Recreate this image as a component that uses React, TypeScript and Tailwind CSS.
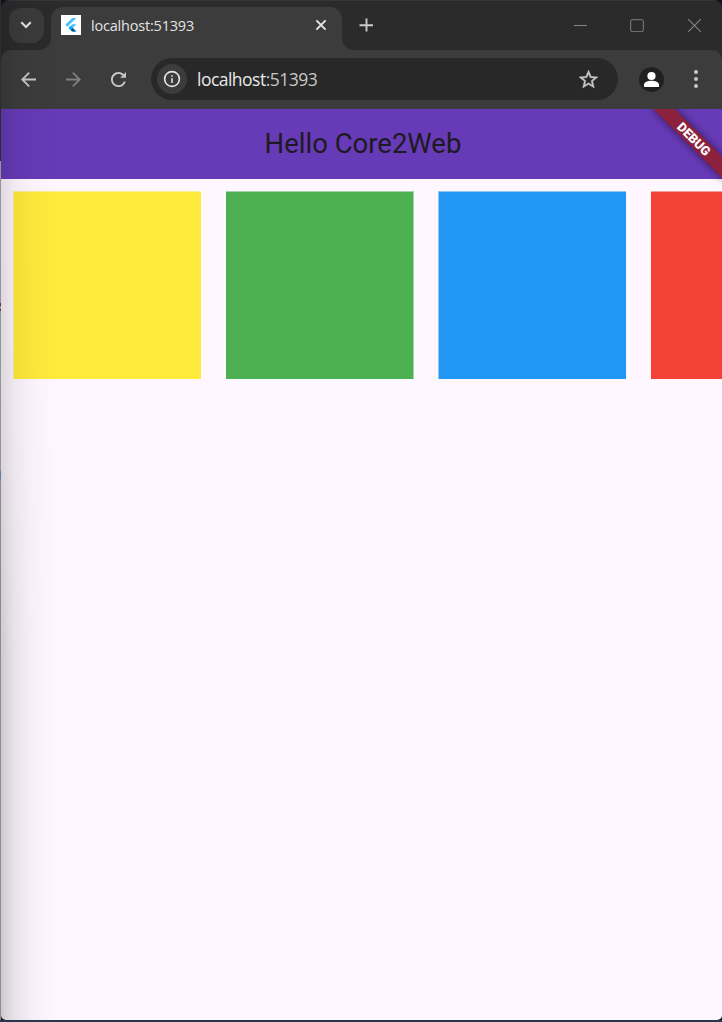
import React from 'react';

const uiFont = "font-['Open_Sans','Noto_Sans',sans-serif]";

function FlutterLogo() {
  return (
    <svg viewBox="0 0 20 20" className="block size-5 bg-white">
      <path d="M11.2 3h4.1L6.5 11.7 4.4 9.7z" fill="#47c5fb" />
      <path d="M11.2 9.3h4.1l-3.6 3.6 3.6 3.7h-4.1l-3.7-3.7z" fill="#47c5fb" />
      <path d="M9.5 14.8l2.1-2 3.7 3.8h-4.1z" fill="#00569e" />
      <path d="M7.5 12.9l2-2.1 2.1 2-2.1 2.1z" fill="#00b5f8" />
    </svg>
  );
}

function TabStrip() {
  return (
    <div className="flex h-[50px] shrink-0 items-start bg-[#2b2b2b] border-t border-[#37373b]">
      <div className="ml-2 mt-[7px] flex size-[35px] items-center justify-center rounded-[12px] bg-[#3b3b3b]">
        <svg viewBox="0 0 12 8" className="-ml-px -mt-px h-2 w-3" fill="none" stroke="#e3e3e3" strokeWidth="2.1">
          <path d="M1.3 1.3L6 6l4.7-4.7" />
        </svg>
      </div>
      <div className="relative ml-[7px] mt-[6px] flex h-[43px] w-[291px] items-start rounded-t-[12px] bg-[#3c3c3c] pl-[10px] pt-[8px]">
        <svg viewBox="0 0 12 12" className="absolute -left-3 bottom-0 size-3">
          <path d="M12 0v12H0A12 12 0 0 0 12 0z" fill="#3c3c3c" />
        </svg>
        <svg viewBox="0 0 12 12" className="absolute -right-3 bottom-0 size-3">
          <path d="M0 0v12h12A12 12 0 0 1 0 0z" fill="#3c3c3c" />
        </svg>
        <FlutterLogo />
        <span className={`${uiFont} ml-[10px] mt-px w-[104px] whitespace-nowrap text-[14.5px] leading-5 tracking-[-0.2px] text-[#e3e3e3]`}>
          localhost:51393
        </span>
        <svg viewBox="0 0 12 12" className="ml-[120px] mt-[4px] size-3" stroke="#e3e3e3" strokeWidth="2">
          <path d="M1.4 1.4l9.2 9.2M10.6 1.4l-9.2 9.2" />
        </svg>
      </div>
      <svg viewBox="0 0 14 14" className="ml-[17px] mt-[17px] size-[14px]" stroke="#cbcbcb" strokeWidth="1.9">
        <path d="M7.5 .5v13M.5 7.2h13.5" />
      </svg>
      <div className="ml-auto flex h-full items-start pr-5 pt-[17px]">
        <svg viewBox="0 0 14 14" className="size-[14px]" stroke="#858585">
          <path d="M0 7.5h13" />
        </svg>
        <svg viewBox="0 0 14 14" className="ml-[42px] size-[14px]" fill="none" stroke="#808080">
          <rect x=".7" y="1.7" width="12.6" height="12" rx="1.5" />
        </svg>
        <svg viewBox="0 0 14 14" className="ml-[44px] size-[14px]" stroke="#858585" strokeWidth="1.1">
          <path d="M.2 1.2l12.6 12.6M12.8 1.2L.2 13.8" />
        </svg>
      </div>
    </div>
  );
}

function Toolbar() {
  return (
    <div className="flex h-[59px] shrink-0 items-center rounded-t-[10px] bg-[#3c3c3c] pb-px pl-5 pr-[18px]">
      <svg viewBox="4 4 16 16" className="size-[15px] shrink-0" fill="#c7c7c7">
        <path d="M20 11H7.83l5.59-5.59L12 4l-8 8 8 8 1.41-1.41L7.83 13H20v-2z" />
      </svg>
      <svg viewBox="4 4 16 16" className="ml-[30px] size-[15px] shrink-0" fill="#7f7f7f">
        <path d="M12 4l-1.41 1.41L16.17 11H4v2h12.17l-5.58 5.59L12 20l8-8z" />
      </svg>
      <svg viewBox="4 4 16 16" className="ml-[30px] mr-px size-[15px] shrink-0" fill="#c7c7c7">
        <path d="M17.65 6.35C16.2 4.9 14.21 4 12 4c-4.42 0-7.99 3.58-7.99 8s3.57 8 7.99 8c3.73 0 6.84-2.55 7.73-6h-2.08c-.82 2.33-3.04 4-5.65 4-3.31 0-6-2.69-6-6s2.69-6 6-6c1.66 0 3.14.69 4.22 1.78L13.8 10.2H20V4z" />
      </svg>
      <div className="ml-[24px] flex h-[42px] w-[467px] items-center rounded-full bg-[#282828] pl-[6px] pr-5">
        <div className="flex size-[30px] items-center justify-center rounded-full bg-[#3c3c3c]">
          <svg viewBox="0 0 18 18" className="size-[18px]">
            <circle cx="9" cy="9" r="7.4" fill="none" stroke="#e3e3e3" strokeWidth="1.7" />
            <path d="M8.2 8.2h1.6v4.7H8.2zM8.2 5.2h1.6v1.6H8.2z" fill="#e3e3e3" />
          </svg>
        </div>
        <span className={`${uiFont} ml-[10px] whitespace-nowrap text-[17.5px] leading-6 tracking-[-0.52px] text-[#c7c7c7]`}>
          <span className="text-[#e8e8e8]">localhost</span>:51393
        </span>
        <svg viewBox="2 2 20 20" className="ml-auto size-[19px]" fill="#c7c7c7" stroke="#c7c7c7" strokeWidth=".4">
          <path d="M22 9.24l-7.19-.62L12 2 9.19 8.63 2 9.24l5.46 4.73L5.82 21 12 17.27 18.18 21l-1.63-7.03L22 9.24zM12 15.4l-3.76 2.27 1-4.28-3.32-2.88 4.38-.38L12 6.1l1.71 4.04 4.38.38-3.32 2.88 1 4.28L12 15.4z" />
        </svg>
      </div>
      <svg viewBox="0 0 25 25" className="ml-[21px] size-[25px] shrink-0">
        <circle cx="12.5" cy="12.5" r="12.5" fill="#1f2120" />
        <circle cx="12.5" cy="9" r="4.1" fill="#fff" />
        <path d="M5 20v-2.4c0-2.5 4-3.8 7.5-3.8s7.5 1.3 7.5 3.8V20z" fill="#fff" />
      </svg>
      <svg viewBox="0 0 18 18" className="ml-auto -mr-px size-[18px] shrink-0" fill="#c7c7c7">
        <circle cx="9" cy="2" r="2" />
        <circle cx="9" cy="9" r="2" />
        <circle cx="9" cy="16" r="2" />
      </svg>
    </div>
  );
}

function AppBar() {
  return (
    <div className="relative flex h-[70px] shrink-0 items-center justify-center bg-[#673ab7] pb-[2px] pl-[3px]">
      <h1 className="whitespace-nowrap font-[Roboto,sans-serif] text-[27.5px] leading-[35px] font-normal text-[#1d1b20]">
        Hello Core2Web
      </h1>
      <div className="absolute right-0 top-0 h-[85px] w-[100px] overflow-hidden">
        <div className="absolute left-[52px] top-[35px] flex h-[15px] w-[100px] origin-[50px_-35px] rotate-45 items-center justify-center bg-[#8b213d] font-[Roboto,sans-serif] text-[12.75px] leading-[15px] font-black text-white shadow-[0_0_9px_rgba(0,0,0,0.55)]">
          DEBUG
        </div>
      </div>
    </div>
  );
}

function ColorBoxes() {
  return (
    <div className="flex gap-[25px] overflow-hidden pl-3 pt-3">
      <div className="h-[188px] w-[188px] shrink-0 border-l border-t border-[#f9ef9c] bg-[#ffeb3b]" />
      <div className="h-[188px] w-[188px] shrink-0 border-r border-t border-[#a5d3a7] bg-[#4caf50]" />
      <div className="-ml-px h-[188px] w-[188px] shrink-0 border-l border-t border-[#90c7f9] bg-[#2196f3]" />
      <div className="h-[188px] w-[188px] shrink-0 border-t border-[#f99d9b] bg-[#f44336]" />
    </div>
  );
}

export default function App() {
  return (
    <div className="flex h-[1022px] w-[722px] flex-col overflow-hidden bg-[#293650]">
      <div className="relative flex h-[1020px] bg-[#151522]">
        <div className="flex w-px shrink-0 flex-col">
          <div className="h-[161px] bg-[#2c2c2f]" />
          <div className="h-[142px] bg-[#969498]" />
          <div className="h-[3px] bg-[#5b3a34]" />
          <div className="h-[3px] bg-[#969498]" />
          <div className="h-[2px] bg-[#5b3a44]" />
          <div className="h-[160px] bg-[#969498]" />
          <div className="h-2 bg-[#5681a5]" />
          <div className="flex-1 bg-[#8d8b8d]" />
        </div>
        <div className="flex w-[721px] flex-col overflow-hidden rounded-t-[9px] rounded-b-[5px] bg-[#3c3c3c]">
          <div className="flex shrink-0 flex-col bg-[#2b2b2b]">
            <TabStrip />
            <Toolbar />
          </div>
          <div className="flex min-h-0 flex-1 flex-col bg-[#fef7ff]">
            <div className="relative z-10">
              <AppBar />
            </div>
            <ColorBoxes />
          </div>
        </div>
        <div className="pointer-events-none absolute left-px top-0 z-20 h-[1020px] w-[56px] bg-[linear-gradient(to_right,rgba(0,0,0,0.19),rgba(0,0,0,0.09)_22%,rgba(0,0,0,0.03)_55%,transparent)] [mask-image:linear-gradient(to_bottom,rgba(0,0,0,0.55),rgba(0,0,0,0.7)_40%,black_65%)]" />
      </div>
    </div>
  );
}
